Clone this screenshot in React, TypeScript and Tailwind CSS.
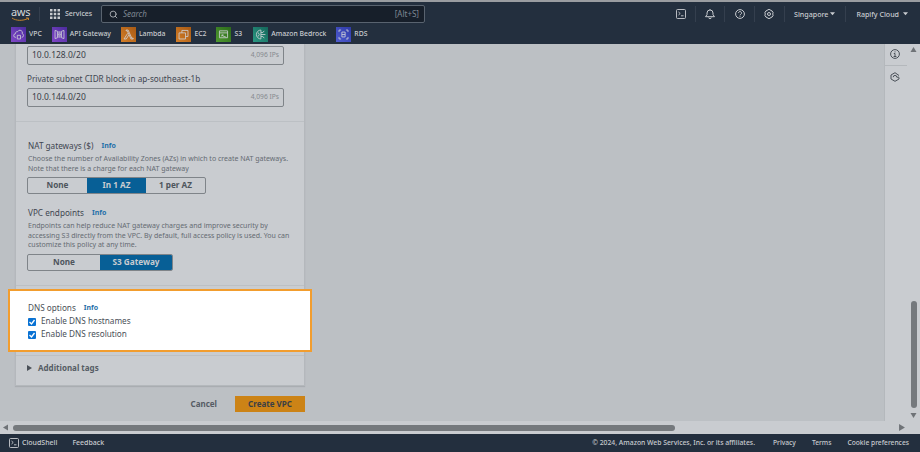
import React from 'react';
import { Search } from 'lucide-react';

const shortcuts = [
  { label: 'VPC', bg: 'from-[#4b2b9e] to-[#8248c8]', gap: 'mr-[10px]', icon: <path d="M5 11.500H4.500a2.200 2.200 0 0 1-.3-4.400 2.300 2.300 0 0 1 2.800-2.600A3 3 0 0 1 12.500 7a2.300 2.300 0 0 1-.5 4.500M6.500 9h4v4.500h-4z" /> },
  { label: 'API Gateway', bg: 'from-[#4b2b9e] to-[#8248c8]', gap: 'mr-[10px]', icon: <path d="M2.500 3l3 1v8l-3 1zM13.500 3l-3 1v8l3 1zM7.300 4v8M8.700 4v8M6.500 8h.8M8.700 8h.8" /> },
  { label: 'Lambda', bg: 'from-[#a85a14] to-[#d47f28]', gap: 'mr-[11px]', icon: <path d="M5 2.500h2.500L12 12.500h1.800v1h-2.800L6.500 3.500H5zM7 6.500 2.500 13.500h2.800l3-4.800" /> },
  { label: 'EC2', bg: 'from-[#a85a14] to-[#d47f28]', gap: 'mr-[10px]', icon: <path d="M6 6V3h7.500v7.500H10.500M2.500 6h8v7.500h-8z" /> },
  { label: 'S3', bg: 'from-[#2c6b1c] to-[#4f9a2f]', gap: 'mr-[11px]', icon: <path d="M3 3.500h10v8.500H3zM3 6h10M6 8.500c1.500 2 4 2 5.500 3M6 8.500h2M6 8.500v2" /> },
  { label: 'Amazon Bedrock', bg: 'from-[#14665a] to-[#2c9a84]', gap: 'mr-[10px]', icon: <path d="M8.500 2.500a5.500 5.500 0 1 0 0 11M8.500 2.500v11M8.500 5.500h2.500l1.500-2M8.500 8H14M8.500 10.500h2.500l1.500 2M5 5.500l1.500 2.500L5 10.500" /> },
  { label: 'RDS', bg: 'from-[#2f3aa8] to-[#4f5cd0]', gap: '', icon: <path d="M2.500 5V2.500H5M11 2.500h2.500V5M2.500 11v2.500H5M11 13.500h2.500V11M6 5v6M10 5v6M6 5h4M6 11h4M6 8h4" /> },
];

const Divider = () => <span className="block h-[16px] w-px bg-[#343f4e]" />;

const Caret = ({ className }: { className?: string }) => (
  <svg viewBox="0 0 8 5" className={className} fill="currentColor"><path d="M0 0h8L4 5z" /></svg>
);

const TerminalIcon = ({ className }: { className?: string }) => (
  <svg viewBox="0 0 10 10" className={className} fill="none" stroke="currentColor" strokeWidth="0.900">
    <rect x="0.500" y="0.500" width="9" height="9" rx="1" />
    <path d="M2.500 3l1.700 1.500L2.500 6M5 6.800h2.500" />
  </svg>
);

const BellIcon = () => (
  <svg viewBox="0 0 10 10" className="h-[10px] w-[10px]" fill="none" stroke="currentColor" strokeWidth="1">
    <path d="M.5 7.700h9L8 5.700V4a3 3 0 0 0-6 0v1.700zM3.800 8.500a1.200 1.200 0 0 0 2.400 0M5 1V.2" />
  </svg>
);

const HelpIcon = () => (
  <svg viewBox="0 0 10 10" className="h-[10px] w-[10px]" fill="none" stroke="currentColor" strokeWidth="1">
    <circle cx="5" cy="5" r="4.400" />
    <path d="M3.500 4a1.500 1.500 0 1 1 2.400 1.200C5.300 5.600 5 5.800 5 6.400M5 7v.8" />
  </svg>
);

const GearIcon = ({ className }: { className?: string }) => (
  <svg viewBox="0 0 10 10" className={className} fill="none" stroke="currentColor" strokeWidth="1">
    <path d="M3.800.6h2.400l.6 1.100 1.200.1 1.200 2-.6 1.200.6 1.200-1.200 2-1.200.1-.6 1.100H3.800l-.6-1.100-1.200-.1-1.200-2 .6-1.200-.6-1.200 1.200-2 1.200-.1z" />
    <circle cx="5" cy="5" r="1.500" />
  </svg>
);

const InfoIcon = () => (
  <svg viewBox="0 0 10 10" className="h-[10px] w-[10px]" fill="none" stroke="currentColor" strokeWidth="1">
    <circle cx="5" cy="5" r="4.400" />
    <path d="M5 2.400v1M3.800 4.500H5v3M3.600 7.500h2.800" />
  </svg>
);

const ResourceIcon = () => (
  <svg viewBox="0 0 10 10" className="h-[10px] w-[10px]" fill="none" stroke="currentColor" strokeWidth="1">
    <path d="M9 3.500 5 .7 1 3v4l4 2.300L9 7V5.500" />
    <path d="M3.200 5.200a1.800 1.800 0 0 1 3.600 0M6.800 5.200H9" />
  </svg>
);

const Label = ({ text, info, className }: { text: string; info?: boolean; className?: string }) => (
  <div className={`flex items-center text-[8.200px] leading-[12px] text-[#3f4650] ${className ?? ''}`}>
    <span>{text}</span>
    {info && <span className="ml-[8px] text-[7px] font-bold text-[#1f6fa8]">Info</span>}
  </div>
);

const CidrInput = ({ value }: { value: string }) => (
  <div className="ml-[11px] flex h-[19px] w-[257px] items-center justify-between rounded-[2px] border border-[#7f8489] pl-[4px] pr-[4px]">
    <span className="text-[8.500px] text-[#3a4048]">{value}</span>
    <span className="text-[6.700px] text-[#868a8f]">4,096 IPs</span>
  </div>
);

const Segment = ({ label, active, w }: { label: string; active?: boolean; w: string }) => (
  <div className={`flex h-full items-center justify-center text-[8.200px] font-bold ${w} ${active ? 'bg-[#075f96] text-[#c9ccd0]' : 'text-[#4e555d]'}`}>
    {label}
  </div>
);

const Check = () => (
  <span className="flex h-[8px] w-[8px] items-center justify-center rounded-[1px] bg-[#0972d3]">
    <svg viewBox="0 0 8 8" className="h-[8px] w-[8px]" fill="none" stroke="white" strokeWidth="1.300"><path d="M1.500 4l2 2 3-4" /></svg>
  </span>
);

export default function App() {
  return (
    <div className="flex h-[452px] w-[920px] flex-col overflow-hidden bg-[#c9ccd0] font-['Noto_Sans',sans-serif]">
      {/* Top nav */}
      <div className="h-[2px] bg-[#9a9da1]" />
      <div className="flex h-[42px] flex-col bg-[#232f3e] text-[#c9ccd0]">
        <div className="flex h-[22px] items-center pl-[11px] pt-[2px]">
          <div className="relative h-[16px] w-[19px]">
            <span className="block text-center text-[11px] leading-[11px] tracking-[-0.3px] text-[#d4d7da]">aws</span>
            <svg viewBox="0 0 19 5" className="absolute bottom-0 left-0 h-[5px] w-[19px]" fill="none" stroke="#c5822b" strokeWidth="1"><path d="M1 1c4 3 11 3 16 .5M15 1h2.500v2" /></svg>
          </div>
          <span className="ml-[9px] h-[14px] w-px bg-[#343f4e]" />
          <svg viewBox="0 0 10 10" className="ml-[10px] h-[10px] w-[10px]" fill="#c9ccd0">
            <path d="M0 0h2.500v2.500H0zM3.750 0h2.500v2.500h-2.500zM7.500 0H10v2.500H7.500zM0 3.750h2.500v2.500H0zM3.750 3.750h2.500v2.500h-2.500zM7.500 3.750H10v2.500H7.500zM0 7.500h2.500V10H0zM3.750 7.500h2.500V10h-2.500zM7.500 7.500H10V10H7.500z" />
          </svg>
          <span className="ml-[5px] w-[26px] whitespace-nowrap text-[7px] font-medium">Services</span>
          <div className="ml-[10px] flex h-[18px] w-[324px] items-center justify-between rounded-[2px] border border-[#59636f] bg-[#171f2a] pl-[7px] pr-[5px]">
            <div className="flex items-center">
              <Search size={9} strokeWidth={2} className="text-[#c9ccd0]" />
              <span className="ml-[5px] text-[8px] italic text-[#7f8893]">Search</span>
            </div>
            <span className="text-[8px] text-[#7f8893]">[Alt+S]</span>
          </div>
          <div className="ml-auto flex items-center pr-[12px]">
            <TerminalIcon className="h-[10px] w-[10px]" />
            <span className="mx-[9px]"><Divider /></span>
            <BellIcon />
            <span className="mx-[9.500px]"><Divider /></span>
            <HelpIcon />
            <span className="mx-[9px]"><Divider /></span>
            <GearIcon className="h-[10px] w-[10px]" />
            <span className="ml-[10.500px] mr-[9px]"><Divider /></span>
            <span className="text-[7.100px] font-medium">Singapore</span>
            <Caret className="ml-[2px] h-[3.500px] w-[5px]" />
            <span className="mx-[10px]"><Divider /></span>
            <span className="text-[7.100px] font-medium">Rapify Cloud</span>
            <Caret className="ml-[4px] h-[3.500px] w-[5px]" />
          </div>
        </div>
        <div className="flex h-[20px] items-center pl-[11px]">
          {shortcuts.map((s) => (
            <div key={s.label} className={`flex items-center ${s.gap}`}>
              <span className={`flex h-[15px] w-[15px] items-center justify-center bg-linear-to-bl ${s.bg}`}>
                <svg viewBox="0 0 16 16" className="h-[13px] w-[13px]" fill="none" stroke="#cfd2d6" strokeWidth="1">{s.icon}</svg>
              </span>
              <span className="ml-[3px] text-[6.850px] font-medium">{s.label}</span>
            </div>
          ))}
        </div>
      </div>

      {/* Content */}
      <div className="flex min-h-0 flex-1">
        <div className="flex min-w-0 flex-1 flex-col">
          <div className="flex min-h-0 flex-1">
            <div className="min-w-0 flex-1 bg-[#bcc0c4]">
              {/* Form column */}
              <div className="ml-[15px] w-[290px]">
                <div className="border-x border-b border-[#b4b8bc] bg-[#c9ccd0] pt-[2px] shadow-[0_1px_1px_#a9adb1]">
                  <CidrInput value="10.0.128.0/20" />
                  <Label text="Private subnet CIDR block in ap-southeast-1b" className="ml-[11px] mt-[8px] mb-[3px]" />
                  <CidrInput value="10.0.144.0/20" />
                  <div className="mt-[14px] h-px bg-[#bcc0c4]" />

                  <Label text="NAT gateways ($)" info className="ml-[12px] mt-[18px]" />
                  <p className="ml-[12px] mt-[2px] w-[263px] text-[7px] leading-[9.500px] text-[#656b72]">
                    Choose the number of Availability Zones (AZs) in which to create NAT gateways. Note that there is a charge for each NAT gateway
                  </p>
                  <div className="ml-[11px] mt-[4px] flex h-[17px] w-[179px] overflow-hidden rounded-[2px] border border-[#7f8489]">
                    <Segment label="None" w="w-[59px]" />
                    <Segment label="In 1 AZ" active w="w-[59px]" />
                    <Segment label="1 per AZ" w="w-[59px]" />
                  </div>

                  <Label text="VPC endpoints" info className="ml-[12px] mt-[13px]" />
                  <p className="ml-[12px] mt-[2px] w-[263px] text-[7px] leading-[9.500px] text-[#656b72]">
                    Endpoints can help reduce NAT gateway charges and improve security by accessing S3 directly from the VPC. By default, full access policy is used. You can customize this policy at any time.
                  </p>
                  <div className="ml-[11px] mt-[4px] flex h-[17px] w-[146px] overflow-hidden rounded-[2px] border border-[#7f8489]">
                    <Segment label="None" w="w-[72px]" />
                    <Segment label="S3 Gateway" active w="w-[72px]" />
                  </div>
                  <div className="mt-[14px] h-px bg-[#bcc0c4]" />

                  {/* Highlighted DNS section */}
                  <div className="-mx-[8px] mt-[3.500px] h-[63px] border-2 border-[#f29d2e] bg-white pl-[18px] pt-[11px]">
                    <Label text="DNS options" info className="text-[#4a5058]" />
                    <label className="mt-[1px] flex h-[13px] items-center text-[8.200px] text-[#4a5058]"><Check /><span className="ml-[5px]">Enable DNS hostnames</span></label>
                    <label className="flex h-[13px] items-center text-[8.200px] text-[#4a5058]"><Check /><span className="ml-[5px]">Enable DNS resolution</span></label>
                  </div>
                  <div className="mt-[3px] h-px bg-[#bcc0c4]" />
                  <div className="flex h-[29px] items-center pb-[5px] pl-[11px] text-[8px] font-bold text-[#565c64]">
                    <svg viewBox="0 0 5 6" className="h-[6px] w-[5px]" fill="#4a5058"><path d="M0 0l5 3-5 3z" /></svg>
                    <span className="ml-[6px]">Additional tags</span>
                  </div>
                </div>
                <div className="mt-[10px] flex items-center justify-end">
                  <span className="text-[8px] font-bold text-[#565c64]">Cancel</span>
                  <div className="ml-[18px] flex h-[16px] w-[70px] items-center justify-center bg-[#cc8316] text-[8px] font-bold text-[#3a3f45]">Create VPC</div>
                </div>
              </div>
            </div>
            {/* Right rail */}
            <div className="flex w-[23px] flex-col items-center border-l border-[#b4b8bc] bg-[#c9ccd0] pt-[5px] text-[#4a5058]">
              <span className="pr-[2px]"><InfoIcon /></span>
              <div className="my-[6px] h-px w-full bg-[#b4b8bc]" />
              <span className="pr-[2px]"><ResourceIcon /></span>
            </div>
          </div>
          {/* Horizontal scrollbar */}
          <div className="flex h-[13px] items-center pl-[3px]">
            <svg viewBox="0 0 5 6" className="h-[7px] w-[5px]" fill="#6f7377"><path d="M5 0v6L0 3z" /></svg>
            <div className="ml-[5px] h-[6px] w-[662px] rounded-full bg-[#75797d]" />
            <svg viewBox="0 0 5 6" className="ml-[224px] h-[7px] w-[6px]" fill="#6f7377"><path d="M0 0v6l5-3z" /></svg>
          </div>
        </div>
        {/* Vertical scrollbar */}
        <div className="flex w-[13px] flex-col items-center pt-[3px]">
          <svg viewBox="0 0 6 5" className="h-[5px] w-[7px]" fill="#6f7377"><path d="M0 5h6L3 0z" /></svg>
          <div className="mt-[249px] h-[107px] w-[6px] rounded-full bg-[#75797d]" />
          <svg viewBox="0 0 6 5" className="mt-[5px] h-[5px] w-[7px]" fill="#6f7377"><path d="M0 0h6L3 5z" /></svg>
        </div>
      </div>

      {/* Footer */}
      <div className="flex h-[18px] items-center bg-[#232f3e] pl-[9px] pr-[11px] text-[7px] font-medium text-[#c9ccd0]">
        <TerminalIcon className="h-[10px] w-[10px]" />
        <span className="ml-[3px]">CloudShell</span>
        <span className="ml-[15px]">Feedback</span>
        <div className="ml-auto flex items-center text-[6.700px]">
          <span className="text-[6.800px]">© 2024, Amazon Web Services, Inc. or its affiliates.</span>
          <span className="ml-[18px]">Privacy</span>
          <span className="ml-[16px]">Terms</span>
          <span className="ml-[16px]">Cookie preferences</span>
        </div>
      </div>
    </div>
  );
}
